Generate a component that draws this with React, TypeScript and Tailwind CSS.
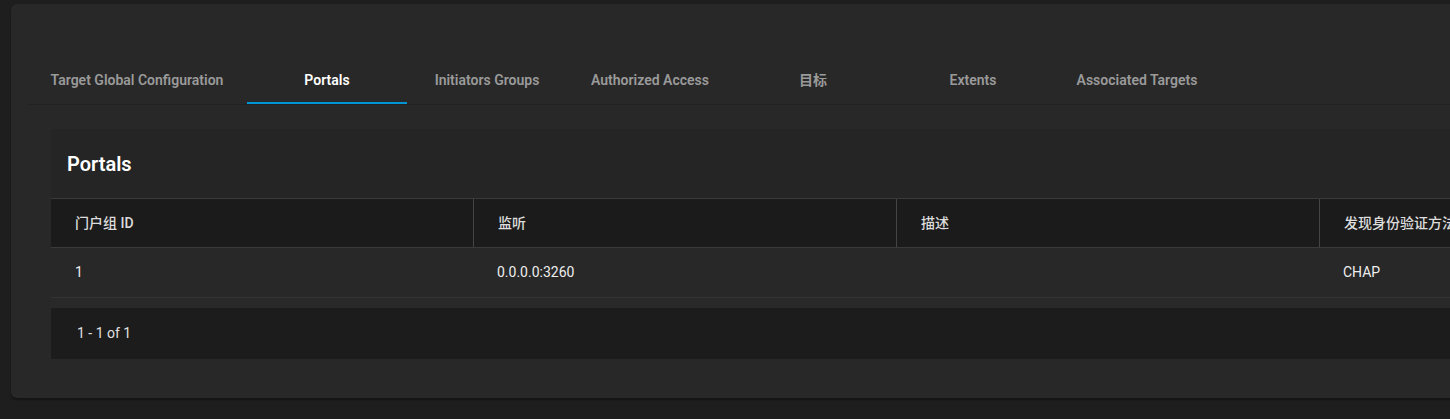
import React from "react";

const tabs = [
  { label: "Target Global Configuration", w: "w-[220px]" },
  { label: "Portals", w: "w-[160px]", active: true },
  { label: "Initiators Groups", w: "w-[160px]" },
  { label: "Authorized Access", w: "w-[166px]" },
  { label: "目标", w: "w-[160px]" },
  { label: "Extents", w: "w-[160px]" },
  { label: "Associated Targets", w: "w-[168px]" },
];

const columns = ["门户组 ID", "监听", "描述", "发现身份验证方法"];
const rows = [["1", "0.0.0.0:3260", "", "CHAP"]];

export default function App() {
  return (
    <div
      className="min-h-[419px] h-[419px] overflow-hidden bg-[#1e1e1e] pl-[11px] pt-[4px]"
      style={{ fontFamily: "Roboto, 'Noto Sans CJK SC', sans-serif" }}
    >
      <div className="w-[1800px] h-[394px] rounded-md bg-[#282828] px-4 pt-[52px] shadow-[0_2px_2px_rgba(0,0,0,0.35)]">
        <div className="flex border-b border-[#222222]">
          {tabs.map((t) => (
            <div
              key={t.label}
              className={
                "relative flex h-12 shrink-0 items-center justify-center whitespace-nowrap text-[14px] font-semibold " +
                t.w +
                " " +
                (t.active ? "text-white" : "text-[#9a9a9a]")
              }
            >
              {t.label}
              {t.active && (
                <span className="absolute bottom-0 left-0 right-0 h-[2px] bg-[#0095d5]" />
              )}
            </div>
          ))}
        </div>

        <div className="ml-6 mt-6 bg-[#252525]">
          <div className="flex h-[69px] items-center px-4 text-[20px] font-semibold text-white">
            Portals
          </div>
          <div className="grid grid-cols-[422px_423px_423px_423px] border-y border-[#3a3a3a] bg-[#1b1b1b] text-[14px] font-medium text-[#dddddd]">
            {columns.map((c, i) => (
              <div
                key={c}
                className={
                  "flex h-12 items-center pl-6 " +
                  (i > 0 ? "border-l border-[#444444]" : "")
                }
              >
                {c}
              </div>
            ))}
          </div>
          {rows.map((r, ri) => (
            <div
              key={ri}
              className="grid grid-cols-[422px_423px_423px_423px] border-b border-[#333333] bg-[#282828] text-[14px] text-[#eeeeee]"
            >
              {r.map((v, i) => (
                <div key={i} className="flex h-[49px] items-center pl-6">
                  {v}
                </div>
              ))}
            </div>
          ))}
          <div className="h-[10px] bg-[#292929]" />
          <div className="flex h-[51px] items-center bg-[#1c1c1c] pl-[26px] text-[14px] text-[#e0e0e0]">
            1 - 1 of 1
          </div>
        </div>
      </div>
    </div>
  );
}
